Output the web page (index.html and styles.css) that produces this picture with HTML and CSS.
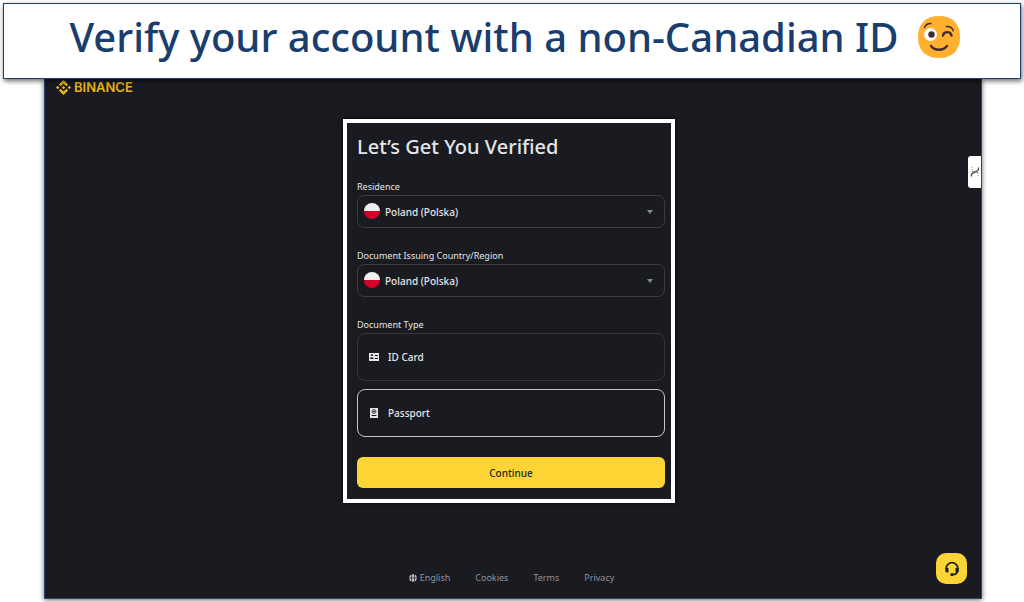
FILE: index.html
```html
<!DOCTYPE html>
<html lang="en">
<head>
  <meta charset="UTF-8" />
  <meta name="viewport" content="width=device-width, initial-scale=1.0" />
  <title>Verify your account</title>
  <link rel="stylesheet" href="styles.css">
</head>
<body>
  <header class="banner">
    <h1>Verify your account with a non-Canadian ID</h1>
    <svg class="wink" viewBox="0 0 42 42" aria-hidden="true">
      <path fill="#ffb02e" d="M21 0C35 0 42 8 42 21S35 42 21 42 0 34 0 21 7 0 21 0Z" />
      <circle cx="12.5" cy="18.5" r="6.5" fill="#fff" />
      <circle cx="13.5" cy="18.5" r="3.2" fill="#402a32" />
      <g fill="none" stroke="#402a32" stroke-linecap="round">
        <path stroke-width="1.4" d="M6.5 11.500C7.500 9 10 7.300 13 7.500M28.500 10.500C32 10.300 34.500 12 35.300 14.800" />
        <path stroke-width="2.4" d="M25 19.500C26 15 32.500 15 33.500 19.500" />
        <path stroke-width="2.4" d="M13 30C17 35 25 35 29 30" />
      </g>
    </svg>
  </header>

  <div class="page">
    <a class="logo" href="#">
      <svg class="logo-mark" viewBox="0 0 126.6 126.6" aria-hidden="true">
        <path fill="currentColor" d="M38.700 53.200 63.300 28.600 87.900 53.200 102.200 38.900 63.300 0 24.400 38.900ZM0 63.300 14.300 49 28.600 63.300 14.300 77.600ZM38.700 73.400 63.300 98 87.900 73.400 102.200 87.700 63.300 126.600 24.400 87.700ZM98 63.300 112.300 49 126.600 63.300 112.300 77.600ZM77.800 63.300 63.300 48.800 48.800 63.300 63.300 77.800Z" />
      </svg>
      BINANCE
    </a>

    <form class="panel">
      <h2>Let’s Get You Verified</h2>

      <div class="field">
        <label for="residence">Residence</label>
        <div class="select-box">
          <span class="flag"></span>
          <select id="residence">
            <option>Poland (Polska)</option>
          </select>
          <span class="caret"></span>
        </div>
      </div>

      <div class="field">
        <label for="issuer">Document Issuing Country/Region</label>
        <div class="select-box">
          <span class="flag"></span>
          <select id="issuer">
            <option>Poland (Polska)</option>
          </select>
          <span class="caret"></span>
        </div>
      </div>

      <fieldset class="types">
        <legend>Document Type</legend>
        <label class="type">
          <input type="radio" name="doctype" value="id">
          <svg viewBox="0 0 12 12" aria-hidden="true">
            <path fill="currentColor" fill-rule="evenodd" d="M1 2H11V10H1ZM3 3.200V5H4.800V3.200ZM2.200 6.500V8H5.500V6.500ZM7 4V5H10V4ZM7 7V8H10V7Z" />
          </svg>
          ID Card
        </label>
        <label class="type">
          <input type="radio" name="doctype" value="passport" checked>
          <svg viewBox="0 0 12 12" aria-hidden="true">
            <path fill="currentColor" d="M2 1H10V11H2Z" />
            <path fill="none" stroke="#1a1b20" stroke-width=".6" d="M6 2.500A2 2 0 1 0 6 6.500 2 2 0 1 0 6 2.500ZM4 4.500H8M6 2.500V6.500" />
            <path fill="none" stroke="#1a1b20" d="M3.500 8.500H8.500" />
          </svg>
          Passport
        </label>
      </fieldset>

      <button class="continue" type="submit">Continue</button>
    </form>

    <footer class="links">
      <a href="#">
        <svg class="globe" viewBox="0 0 8 8" aria-hidden="true">
          <circle cx="4" cy="4" r="3.800" fill="currentColor" />
          <path fill="none" stroke="#1a1b20" stroke-width=".7" d="M0 4H8M2.500 0V8M5.500 0V8" />
        </svg>
        English
      </a>
      <a href="#">Cookies</a>
      <a href="#">Terms</a>
      <a href="#">Privacy</a>
    </footer>

    <button class="side-tab" type="button" aria-label="Open side panel">
      <svg viewBox="0 0 10 12" aria-hidden="true">
        <path fill="none" stroke="#999" stroke-dasharray="1 1" d="M2 1V5M8 7V11" />
        <path fill="none" stroke="#555" stroke-width="1.400" d="M1.500 10.500V8.500C1.500 7 8.500 5 8.500 3.500V1.500" />
        <path fill="none" stroke="#777" d="M2 5.500 4 6M6 6 8 6.500" />
      </svg>
    </button>
    <button class="support" type="button" aria-label="Support">
      <svg viewBox="0 0 16 16" fill="none" stroke="#202226" aria-hidden="true">
        <path stroke-width="1.800" d="M2.200 8.500V7.500A5.800 5.800 0 0 1 13.800 7.500V9C13.800 12 11.500 13.600 8 13.600" />
        <path fill="#202226" stroke="none" d="M1.300 7H4.500V11.500H3C1.800 11.500 1.300 10.800 1.300 9.800ZM11.500 7H14.700V9.800C14.700 10.800 14 11.500 13 11.500H11.500ZM6.500 12.200H9.200V15H6.500Z" />
      </svg>
    </button>
  </div>
</body>
</html>
```

FILE: styles.css
```css
* {
  box-sizing: border-box;
}
body {
  margin: 0;
  min-height: 100vh;
  display: flex;
  flex-direction: column;
  background: #fff;
  font-family: "Noto Sans", sans-serif;
  font-size: 10px;
}
a {
  color: inherit;
  text-decoration: none;
}
button {
  border: 0;
  padding: 0;
  font: inherit;
  cursor: pointer;
}

/* banner */
.banner {
  position: relative;
  z-index: 1;
  display: flex;
  align-items: center;
  justify-content: center;
  gap: 20px;
  height: 76px;
  margin: 3px 3px 0;
  padding: 0 0 8px 6px;
  border: 1px solid #1c3f6e;
  background: #fff;
  box-shadow: 1px 2px 5px rgba(0, 0, 0, 0.6);
}
.banner h1 {
  margin: 0;
  color: #193d6d;
  font-size: 40px;
  font-weight: 500;
  line-height: 48px;
}
.wink {
  width: 42px;
  height: 42px;
}

/* page */
.page {
  position: relative;
  flex: 1;
  display: flex;
  flex-direction: column;
  margin: 0 42px 3px 44px;
  border: 1px solid #2c4770;
  border-top: 0;
  background: #1a1b20;
  color: #e4e5e8;
  box-shadow: 0 1px 5px rgba(0, 0, 0, 0.6);
}
.logo {
  display: flex;
  align-items: center;
  align-self: flex-start;
  gap: 3px;
  height: 16px;
  margin-left: 11px;
  color: #e6b414;
  font-family: Inter, sans-serif;
  font-size: 13px;
  font-weight: 600;
}
.logo-mark {
  width: 15px;
  height: 15px;
}

/* form */
.panel {
  align-self: center;
  width: 332px;
  margin: 24px 8px 0 0;
  padding: 8px 6px 11px 10px;
  border: 4px solid #fff;
  box-shadow: 0 0 5px rgba(0, 0, 0, 0.8);
}
.panel h2 {
  margin: 0 0 16px;
  font-size: 20px;
  font-weight: 500;
  line-height: 32px;
}
.field {
  margin-bottom: 20px;
}
.field label,
.types legend {
  display: block;
  padding: 0;
  font-size: 9px;
  line-height: 16px;
}
.select-box {
  position: relative;
}
.select-box select {
  display: block;
  appearance: none;
  width: 100%;
  height: 33px;
  padding: 0 24px 0 27px;
  border: 1px solid #3a3c42;
  border-radius: 7px;
  background: transparent;
  color: inherit;
  font: inherit;
  font-weight: 500;
}
.flag {
  position: absolute;
  top: 8px;
  left: 7px;
  width: 16px;
  height: 16px;
  border-radius: 50%;
  background: linear-gradient(#f0f0f0 50%, #d80027 50%);
}
.caret {
  position: absolute;
  top: 15px;
  right: 12px;
  border: 3px solid transparent;
  border-top: 4px solid #848a95;
  border-bottom: 0;
}
.types {
  min-width: 0;
  margin: 0 0 20px;
  padding: 0;
  border: 0;
}
.type {
  display: flex;
  align-items: center;
  gap: 8px;
  height: 48px;
  padding-left: 10px;
  border: 1px solid #34363c;
  border-radius: 8px;
  font-weight: 500;
}
.type + .type {
  margin-top: 8px;
}
.type:has(:checked) {
  border-color: #c4c5c8;
}
.type input {
  appearance: none;
  position: absolute;
  margin: 0;
}
.type svg {
  width: 12px;
  height: 12px;
}
.continue {
  display: block;
  width: 100%;
  height: 31px;
  border-radius: 6px;
  background: #fcd535;
  color: #202630;
  font-weight: 500;
}

/* footer */
.links {
  display: flex;
  justify-content: center;
  gap: 25px;
  margin-top: auto;
  padding: 0 3px 12px 0;
  color: #8f9299;
  font-size: 9px;
  line-height: 16px;
}
.links a {
  display: flex;
  align-items: center;
  gap: 3px;
}
.globe {
  width: 8px;
  height: 8px;
  color: #c0c2c6;
}

/* floating buttons */
.side-tab {
  position: absolute;
  top: 77px;
  right: 0;
  display: grid;
  place-items: center;
  width: 13px;
  height: 32px;
  border-radius: 3px 0 0 3px;
  background: #fff;
}
.side-tab svg {
  width: 10px;
  height: 12px;
}
.support {
  position: absolute;
  right: 14px;
  bottom: 14px;
  display: grid;
  place-items: center;
  width: 31px;
  height: 31px;
  border-radius: 10px;
  background: #fcd535;
}
.support svg {
  width: 16px;
  height: 16px;
}
```
